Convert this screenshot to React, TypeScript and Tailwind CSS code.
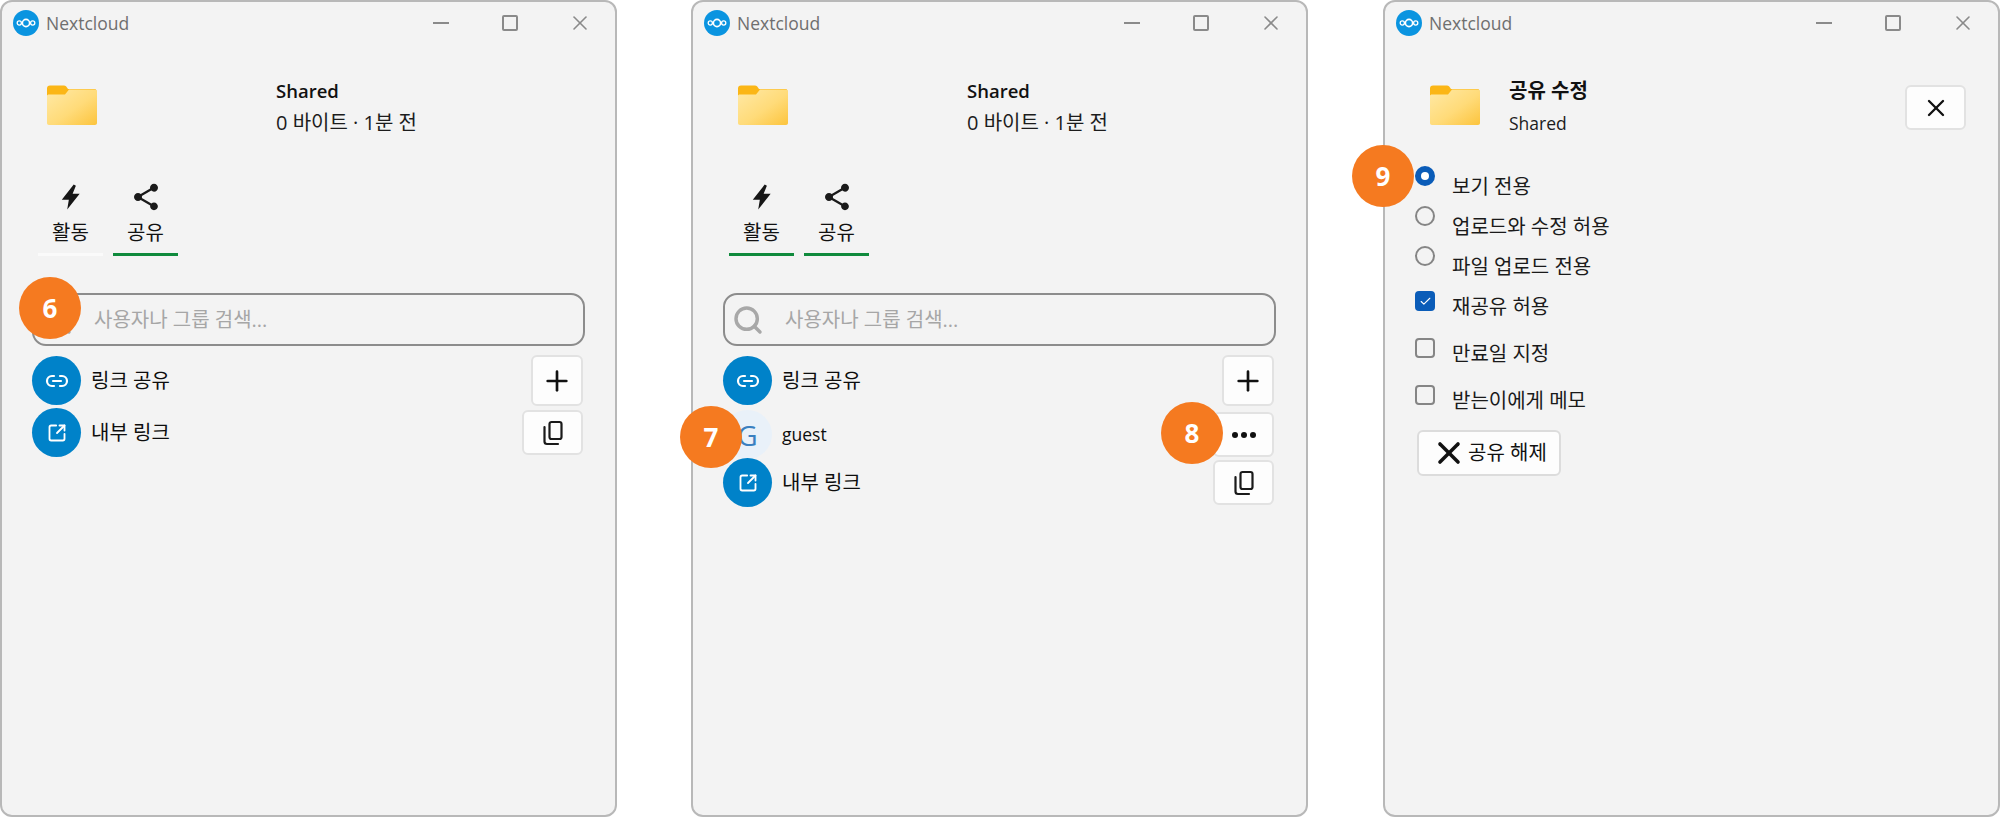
import React from "react";
import { Plus, X, Link2, SquareArrowOutUpRight, Search, Check } from "lucide-react";

const FONT = "[font-family:'Open_Sans','Noto_Sans_CJK_KR',sans-serif]";

function Logo() {
  return (
    <svg width="26" height="26" viewBox="0 0 26 26" className="shrink-0">
      <circle cx="13" cy="13" r="13" fill="#0a94e0" />
      <circle cx="13" cy="13" r="3.600" fill="none" stroke="#fff" strokeWidth="1.600" />
      <circle cx="6.300" cy="13" r="2.100" fill="none" stroke="#fff" strokeWidth="1.300" />
      <circle cx="19.700" cy="13" r="2.100" fill="none" stroke="#fff" strokeWidth="1.300" />
    </svg>
  );
}

function Folder() {
  return (
    <svg width="51" height="40" viewBox="0 0 51 40" className="shrink-0">
      <defs>
        <linearGradient id="fg" x1="0" y1="0" x2="1" y2="1">
          <stop offset="0" stopColor="#ffe9a6" />
          <stop offset="0.55" stopColor="#ffdb79" />
          <stop offset="1" stopColor="#fcc43d" />
        </linearGradient>
      </defs>
      <path d="M1 3.500C1 1.500 2 .5 4 .5h14c1.500 0 2.500 1 4 3.500h26.500c1.200 0 2 .8 2 2v6H1z" fill="#fbb616" />
      <path d="M1 11c0-1 .8-1.500 2-1.500h16l4-5h25.500c1.500 0 2.500 1 2.500 2.500v31c0 1.200-.8 2-2 2H3c-1.200 0-2-.8-2-2z" fill="url(#fg)" />
    </svg>
  );
}

function Bolt() {
  return (
    <svg width="26" height="26" viewBox="0 0 24 24">
      <path d="M14.500 0.500 L3.500 14.500 H10 L8.500 23.500 L20 9 H13.500 L16.500 1.500 Z" fill="#161616" />
    </svg>
  );
}

function Share() {
  return (
    <svg width="32" height="32" viewBox="0 0 24 24">
      <path
        fill="#1a1a1a"
        d="M18 16.080c-.76 0-1.440.3-1.960.77L8.910 12.700c.05-.23.09-.46.09-.7s-.04-.47-.09-.7l7.050-4.110c.54.5 1.250.81 2.040.81 1.660 0 3-1.340 3-3s-1.340-3-3-3-3 1.340-3 3c0 .24.04.47.09.7L8.040 9.810C7.500 9.310 6.790 9 6 9c-1.660 0-3 1.340-3 3s1.340 3 3 3c.79 0 1.500-.31 2.040-.81l7.120 4.160c-.05.21-.08.43-.08.65 0 1.610 1.310 2.920 2.920 2.920s2.920-1.310 2.920-2.920-1.310-2.920-2.920-2.920z"
      />
    </svg>
  );
}

function CopyIcon() {
  return (
    <svg width="24" height="26" viewBox="0 0 24 26" fill="none" stroke="#1a1a1a" strokeWidth="2.200">
      <rect x="8.500" y="2" width="12" height="17" rx="2" />
      <path d="M3.500 7v14.500c0 1.400 1 2.500 2.500 2.500h11" strokeLinecap="round" />
    </svg>
  );
}

function TitleBar() {
  return (
    <div className="flex h-[42px] shrink-0 items-center pl-[11px]">
      <Logo />
      <span className="ml-[7px] text-[17.5px] text-[#6f6f6f]">Nextcloud</span>
      <div className="ml-auto flex items-center pr-[23px]">
        <div className="h-[2px] w-[16px] bg-[#8a8a8a]" />
        <div className="ml-[53px] h-[16px] w-[16px] rounded-[2px] border-2 border-[#8a8a8a]" />
        <X size={24} strokeWidth={1.600} className="ml-[50px] text-[#8a8a8a]" />
      </div>
    </div>
  );
}

function Header() {
  return (
    <div className="mt-[31px] flex pl-[44px]">
      <div className="w-[230px] pt-[10px]">
        <Folder />
      </div>
      <div>
        <div className="text-[18.5px] leading-[32px] font-semibold text-[#111]">Shared</div>
        <div className="text-[20px] leading-[32px] text-[#1c1c1c]">0 바이트 · 1분 전</div>
      </div>
    </div>
  );
}

function Tab({ icon, label, line }: { icon: React.ReactNode; label: string; line: string }) {
  return (
    <div className="flex w-[65px] flex-col items-center">
      <div className="flex h-[24px] items-center justify-center">{icon}</div>
      <div className="mt-[12px] text-[20px] leading-[24px] text-[#111]">{label}</div>
      <div className={`mt-[8px] h-[3px] w-full ${line}`} />
    </div>
  );
}

function Tabs({ first }: { first: string }) {
  return (
    <div className="mt-[46px] flex gap-[10px] pl-[36px]">
      <Tab icon={<Bolt />} label="활동" line={first} />
      <Tab icon={<Share />} label="공유" line="bg-[#0f8a3c]" />
    </div>
  );
}

function SearchBox() {
  return (
    <div className="mt-[37px] ml-[30px] flex h-[53px] w-[553px] items-center rounded-[14px] border-2 border-[#8c8c8c] pl-[7px]">
      <Search size={32} strokeWidth={2.600} className="text-[#a8a8a8]" />
      <span className="ml-[21px] text-[20px] text-[#a6a6a6]">사용자나 그룹 검색...</span>
    </div>
  );
}

function IconButton({ w, h, children }: { w: string; h: string; children: React.ReactNode }) {
  return (
    <div className={`flex shrink-0 items-center justify-center rounded-[6px] border-2 border-[#e2e2e2] bg-[#fdfdfd] ${w} ${h}`}>
      {children}
    </div>
  );
}

function Row({ avatar, label, action, cls, labelCls = "text-[20px]" }: { avatar: React.ReactNode; label: string; action: React.ReactNode; cls: string; labelCls?: string }) {
  return (
    <div className={`flex h-[49px] items-center pr-[32px] pl-[30px] ${cls}`}>
      {avatar}
      <span className={`ml-[10px] text-[#0d0d0d] ${labelCls}`}>{label}</span>
      <div className="ml-auto">{action}</div>
    </div>
  );
}

function BlueAvatar({ children }: { children: React.ReactNode }) {
  return (
    <div className="flex h-[49px] w-[49px] shrink-0 items-center justify-center rounded-full bg-[#0082c9] text-white">
      {children}
    </div>
  );
}

function Badge({ n, cls }: { n: string; cls: string }) {
  return (
    <div className={`absolute flex h-[62px] w-[62px] items-center justify-center rounded-full bg-[#f57a20] text-[26px] font-bold text-white ${cls}`}>
      {n}
    </div>
  );
}

function Window({ children }: { children: React.ReactNode }) {
  return (
    <div className="relative flex h-[817px] w-[617px] shrink-0 flex-col rounded-[12px] border-2 border-[#b8b8b8] bg-[#f3f3f3]">
      {children}
    </div>
  );
}

function Radio({ on, label }: { on?: boolean; label: string }) {
  return (
    <div className="flex h-[40px] items-start">
      <div
        className={
          on
            ? "flex h-[20px] w-[20px] shrink-0 items-center justify-center rounded-full bg-[#0a5cb8]"
            : "h-[20px] w-[20px] shrink-0 rounded-full border-2 border-[#858585]"
        }
      >
        {on && <div className="h-[8px] w-[8px] rounded-full bg-white" />}
      </div>
      <span className="mt-[9px] ml-[17px] text-[20px] leading-[24px] text-[#1a1a1a]">{label}</span>
    </div>
  );
}

function Checkbox({ on, label }: { on?: boolean; label: string }) {
  return (
    <div className="flex h-[45px] items-start">
      <div
        className={
          on
            ? "flex h-[20px] w-[20px] shrink-0 items-center justify-center rounded-[4px] bg-[#0a5cb8] text-white"
            : "h-[20px] w-[20px] shrink-0 rounded-[4px] border-2 border-[#858585]"
        }
      >
        {on && <Check size={13} strokeWidth={2} />}
      </div>
      <span className="mt-[4px] ml-[17px] text-[20px] leading-[24px] text-[#1a1a1a]">{label}</span>
    </div>
  );
}

export default function App() {
  return (
    <div className={`flex h-[817px] w-[2000px] gap-[74px] overflow-hidden bg-white ${FONT}`}>
      <Window>
        <TitleBar />
        <Header />
        <Tabs first="bg-[#fafafa]" />
        <SearchBox />
        <Row
          cls="mt-[10px]"
          avatar={<BlueAvatar><Link2 size={24} strokeWidth={2.200} /></BlueAvatar>}
          label="링크 공유"
          action={<IconButton w="w-[52px]" h="h-[51px]"><Plus size={32} strokeWidth={2} className="text-[#111]" /></IconButton>}
        />
        <Row
          cls="mt-[3px]"
          avatar={<BlueAvatar><SquareArrowOutUpRight size={20} strokeWidth={2.200} /></BlueAvatar>}
          label="내부 링크"
          action={<IconButton w="w-[61px]" h="h-[45px]"><CopyIcon /></IconButton>}
        />
        <Badge n="6" cls="top-[275px] left-[17px]" />
      </Window>

      <Window>
        <TitleBar />
        <Header />
        <Tabs first="bg-[#0f8a3c]" />
        <SearchBox />
        <Row
          cls="mt-[10px]"
          avatar={<BlueAvatar><Link2 size={24} strokeWidth={2.200} /></BlueAvatar>}
          label="링크 공유"
          action={<IconButton w="w-[52px]" h="h-[51px]"><Plus size={32} strokeWidth={2} className="text-[#111]" /></IconButton>}
        />
        <Row
          cls="mt-[5px]"
          labelCls="text-[17.5px] -ml-px"
          avatar={
            <div className="flex h-[49px] w-[49px] shrink-0 items-center justify-center rounded-full bg-[#e9f1f9] text-[28px] text-[#3a80c0]">
              G
            </div>
          }
          label="guest"
          action={
            <IconButton w="w-[61px]" h="h-[45px]">
              <div className="flex gap-[3px]">
                <div className="h-[6px] w-[6px] rounded-full bg-[#111]" />
                <div className="h-[6px] w-[6px] rounded-full bg-[#111]" />
                <div className="h-[6px] w-[6px] rounded-full bg-[#111]" />
              </div>
            </IconButton>
          }
        />
        <Row
          cls="mt-[-1px]"
          avatar={<BlueAvatar><SquareArrowOutUpRight size={20} strokeWidth={2.200} /></BlueAvatar>}
          label="내부 링크"
          action={<IconButton w="w-[61px]" h="h-[45px]"><CopyIcon /></IconButton>}
        />
        <Badge n="7" cls="top-[404px] left-[-13px]" />
        <Badge n="8" cls="top-[400px] left-[468px]" />
      </Window>

      <div className="ml-px">
        <Window>
          <TitleBar />
          <div className="mt-[31px] flex pr-[32px] pl-[44px]">
            <div className="w-[80px] pt-[10px]">
              <Folder />
            </div>
            <div>
              <div className="text-[20px] leading-[32px] font-bold text-[#111]">공유 수정</div>
              <div className="text-[17.5px] leading-[32px] text-[#1c1c1c]">Shared</div>
            </div>
            <div className="mt-[10px] ml-auto">
              <IconButton w="w-[61px]" h="h-[45px]"><X size={28} strokeWidth={2} className="text-[#111]" /></IconButton>
            </div>
          </div>
          <div className="mt-[27px] flex flex-col pl-[30px]">
            <Radio on label="보기 전용" />
            <Radio label="업로드와 수정 허용" />
            <Radio label="파일 업로드 전용" />
            <div className="mt-[5px] flex flex-col gap-[2px]">
              <Checkbox on label="재공유 허용" />
              <Checkbox label="만료일 지정" />
              <Checkbox label="받는이에게 메모" />
            </div>
            <div className="ml-[2px] flex h-[46px] w-[144px] items-center justify-center gap-[1px] rounded-[6px] border-2 border-[#dcdcdc] bg-[#fdfdfd]">
              <X size={36} strokeWidth={2.400} className="text-[#111]" />
              <span className="text-[20px] text-[#111]">공유 해제</span>
            </div>
          </div>
          <Badge n="9" cls="top-[143px] left-[-33px]" />
        </Window>
      </div>
    </div>
  );
}
